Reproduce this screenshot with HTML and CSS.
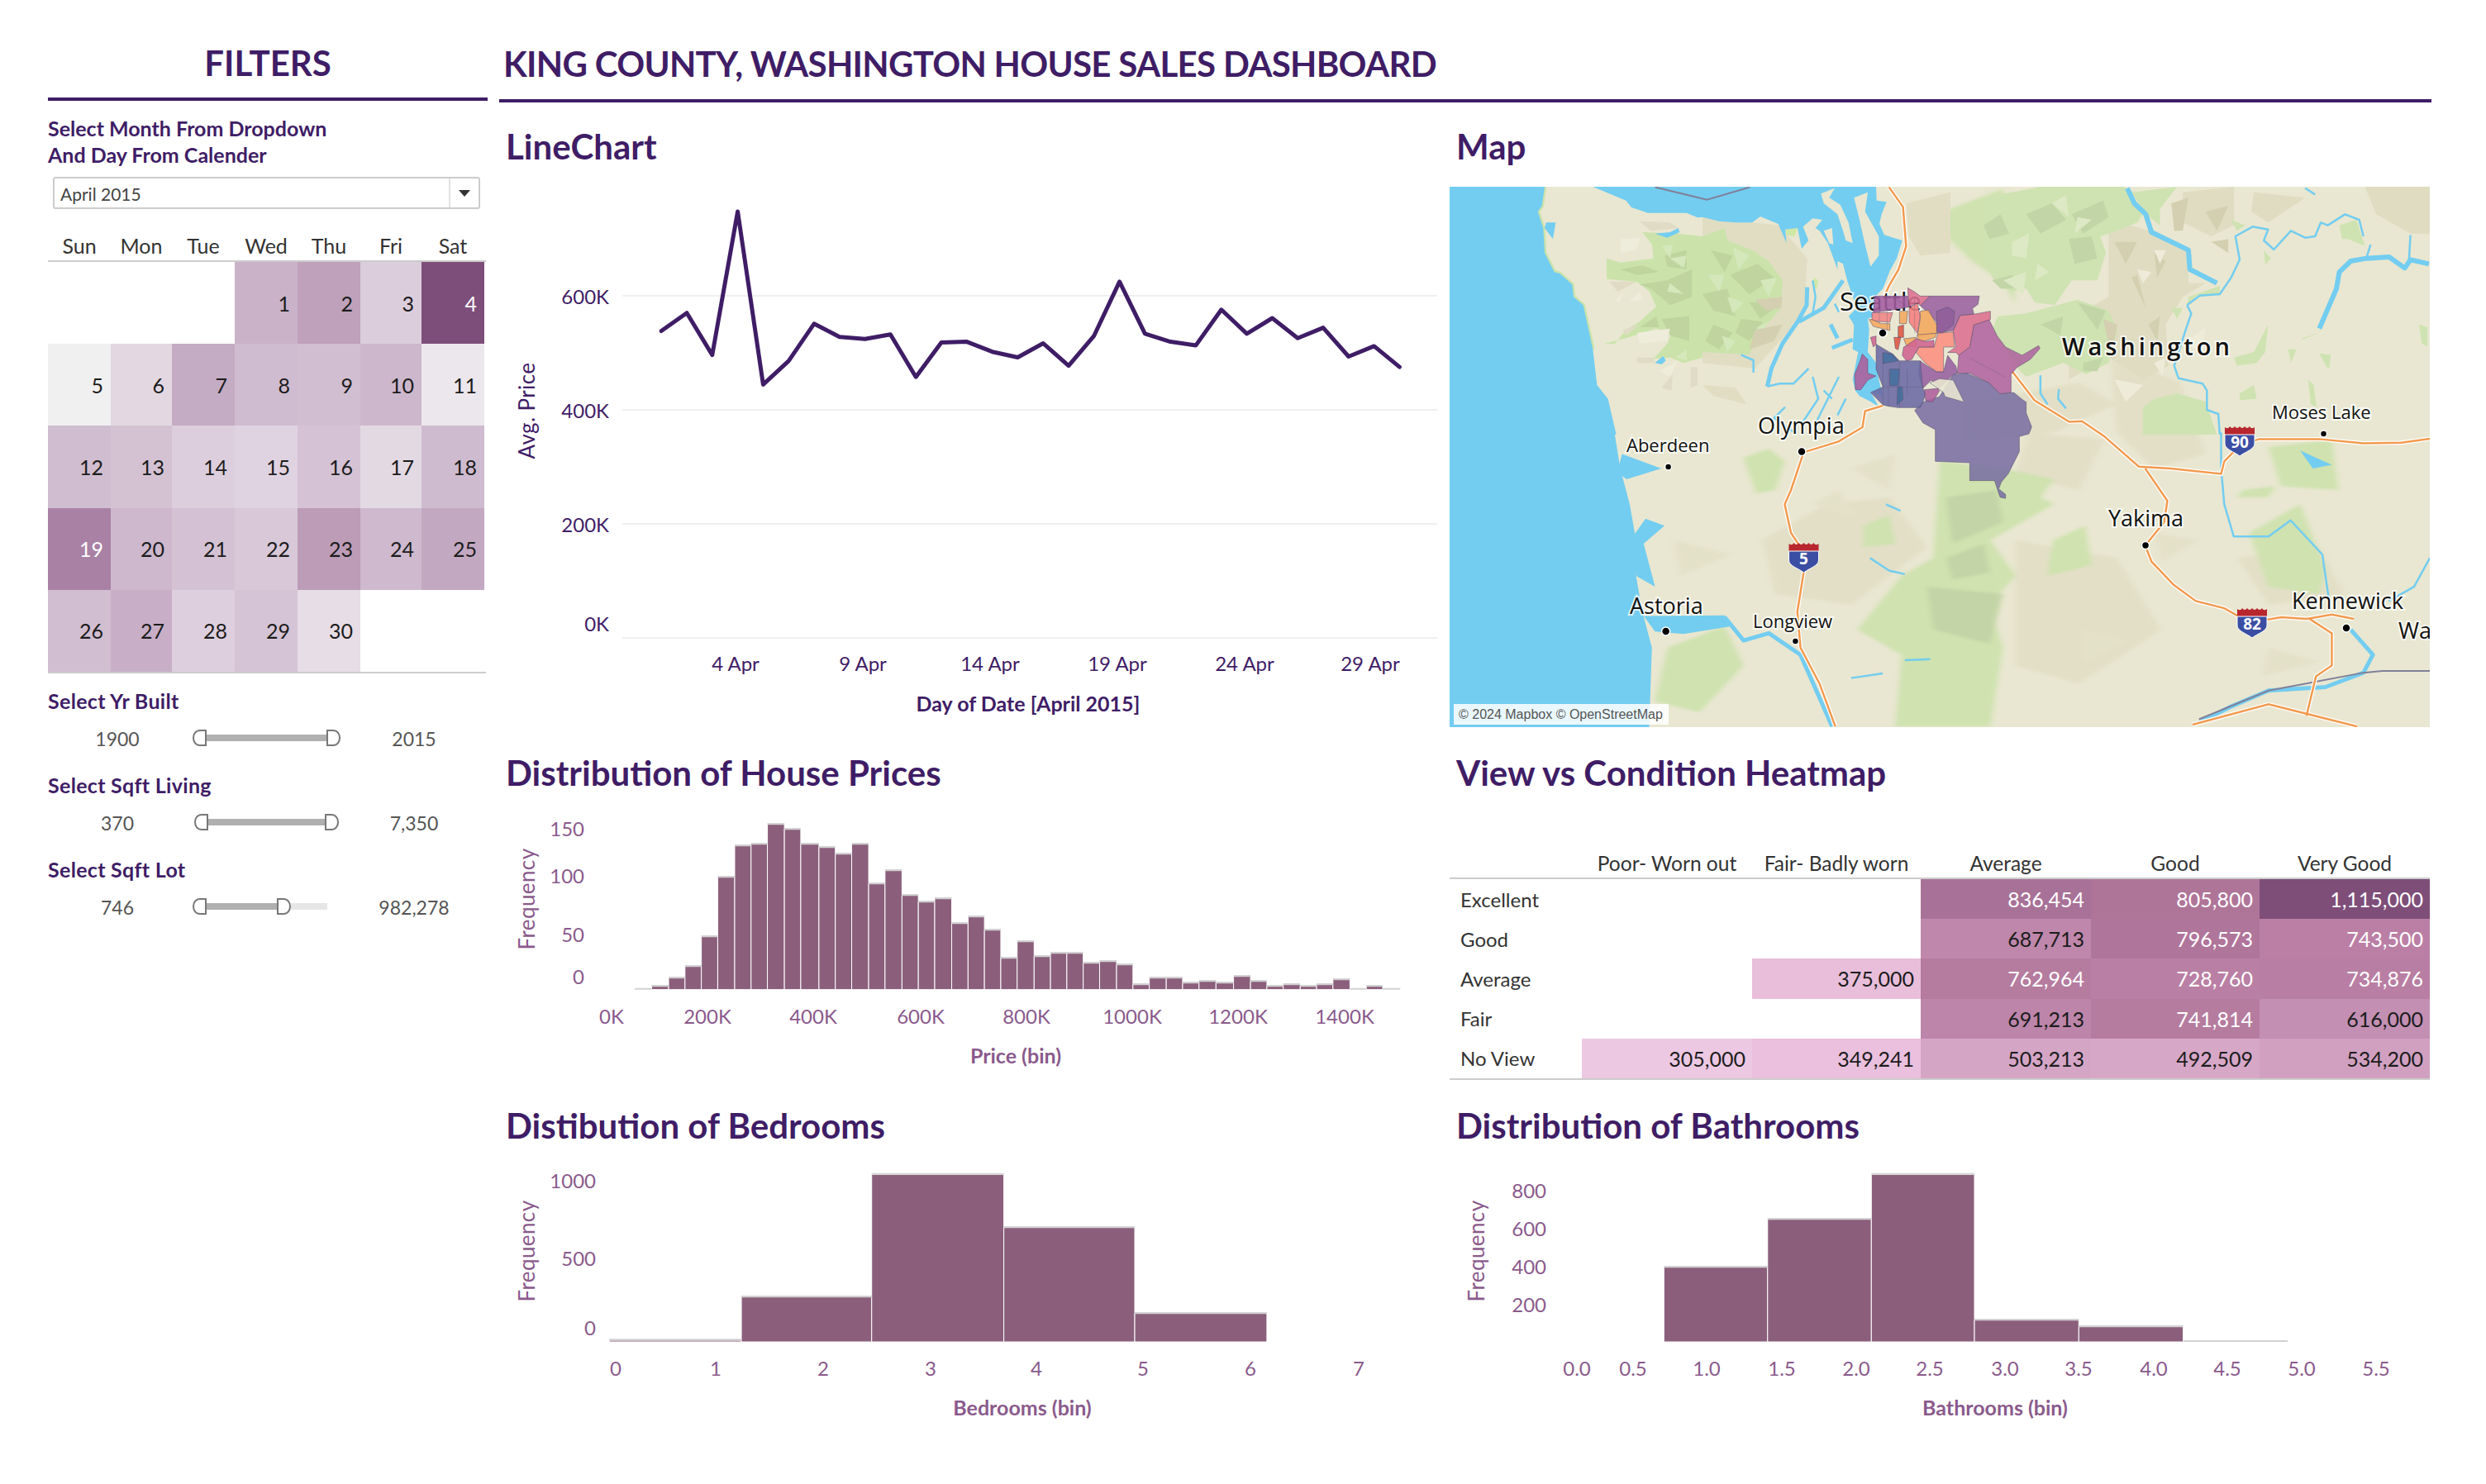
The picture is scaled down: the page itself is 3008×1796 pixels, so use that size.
FILE: index.html
```html
<!DOCTYPE html>
<html lang="en">
<head>
<meta charset="utf-8">
<title>King County, Washington House Sales Dashboard</title>
<link rel="stylesheet" href="styles.css">
</head>
<body>
<div class="page">
  <aside class="sidebar">
    <h2 class="filters-title">FILTERS</h2>
    <p class="filter-intro">Select Month From Dropdown<br>And Day From Calender</p>
    <div class="dropdown"><span class="dropdown-value">April 2015</span><span class="dropdown-btn"><svg width="14" height="8" viewBox="0 0 14 8"><path d="M0 0H14L7 8Z" fill="#333"/></svg></span></div>
    <div class="weekdays"><span>Sun</span><span>Mon</span><span>Tue</span><span>Wed</span><span>Thu</span><span>Fri</span><span>Sat</span></div>
    <div class="calendar">
      <span class="day"></span><span class="day"></span><span class="day"></span>
      <span class="day" style="background:#cab3c9">1</span>
      <span class="day" style="background:#bfa1bb">2</span>
      <span class="day" style="background:#dccddc">3</span>
      <span class="day light" style="background:#7e4e7a">4</span>
      <span class="day" style="background:#f0f0f0">5</span>
      <span class="day" style="background:#e3d8e2">6</span>
      <span class="day" style="background:#c4acc4">7</span>
      <span class="day" style="background:#d0bcd0">8</span>
      <span class="day" style="background:#d1bfd1">9</span>
      <span class="day" style="background:#cdb7cc">10</span>
      <span class="day" style="background:#ece7ec">11</span>
      <span class="day" style="background:#d0bdd0">12</span>
      <span class="day" style="background:#d4c2d3">13</span>
      <span class="day" style="background:#dccedc">14</span>
      <span class="day" style="background:#e0d3e1">15</span>
      <span class="day" style="background:#d5c3d5">16</span>
      <span class="day" style="background:#e3d9e3">17</span>
      <span class="day" style="background:#cfbbcf">18</span>
      <span class="day light" style="background:#a981a5">19</span>
      <span class="day" style="background:#cdb8cd">20</span>
      <span class="day" style="background:#d4c2d4">21</span>
      <span class="day" style="background:#d8c8d8">22</span>
      <span class="day" style="background:#bd9cb8">23</span>
      <span class="day" style="background:#ceb9ce">24</span>
      <span class="day" style="background:#c3a8c2">25</span>
      <span class="day" style="background:#d1bed1">26</span>
      <span class="day" style="background:#c8afc7">27</span>
      <span class="day" style="background:#decfde">28</span>
      <span class="day" style="background:#d5c4d5">29</span>
      <span class="day" style="background:#e7dde6">30</span>
      <span class="day"></span><span class="day"></span>
    </div>
    <div class="slider-group">
      <div class="slider-label">Select Yr Built</div>
      <div class="slider-row">
        <span class="slider-value">1900</span>
        <div class="range">
          <svg class="handle" viewBox="0 0 17 20"><path d="M16 1H9C4 1 1 5 1 10S4 19 9 19H16Z"/></svg>
          <span class="fill"></span>
          <svg class="handle" viewBox="0 0 17 20"><path d="M1 1H8C13 1 16 5 16 10S13 19 8 19H1Z"/></svg>
        </div>
        <span class="slider-value">2015</span>
      </div>
    </div>
    <div class="slider-group">
      <div class="slider-label">Select Sqft Living</div>
      <div class="slider-row">
        <span class="slider-value">370</span>
        <div class="range range-narrow">
          <svg class="handle" viewBox="0 0 17 20"><path d="M16 1H9C4 1 1 5 1 10S4 19 9 19H16Z"/></svg>
          <span class="fill"></span>
          <svg class="handle" viewBox="0 0 17 20"><path d="M1 1H8C13 1 16 5 16 10S13 19 8 19H1Z"/></svg>
        </div>
        <span class="slider-value">7,350</span>
      </div>
    </div>
    <div class="slider-group">
      <div class="slider-label">Select Sqft Lot</div>
      <div class="slider-row">
        <span class="slider-value">746</span>
        <div class="range range-partial">
          <svg class="handle" viewBox="0 0 17 20"><path d="M16 1H9C4 1 1 5 1 10S4 19 9 19H16Z"/></svg>
          <span class="fill"></span>
          <svg class="handle" viewBox="0 0 17 20"><path d="M1 1H8C13 1 16 5 16 10S13 19 8 19H1Z"/></svg>
          <span class="rest"></span>
        </div>
        <span class="slider-value">982,278</span>
      </div>
    </div>
  </aside>

  <main class="main">
    <h1 class="main-title">KING COUNTY, WASHINGTON HOUSE SALES DASHBOARD</h1>
    <div class="panels">

      <section class="panel panel-top">
        <h3 class="panel-title">LineChart</h3>
        <svg class="chart chart-line" viewBox="604 226 1136 654">
          <g class="grid-lines">
            <line x1="753" x2="1739" y1="358" y2="358"/><line x1="753" x2="1739" y1="496" y2="496"/><line x1="753" x2="1739" y1="634" y2="634"/><line x1="753" x2="1739" y1="772" y2="772"/>
          </g>
          <g class="tick dark end">
            <text x="737" y="358">600K</text><text x="737" y="496">400K</text><text x="737" y="634">200K</text><text x="737" y="754">0K</text>
          </g>
          <g class="tick dark mid">
            <text x="890" y="802">4 Apr</text><text x="1044" y="802">9 Apr</text><text x="1198" y="802">14 Apr</text><text x="1352" y="802">19 Apr</text><text x="1506" y="802">24 Apr</text><text x="1658" y="802">29 Apr</text>
          </g>
          <text class="axis-title dark mid" x="1244" y="851">Day of Date [April 2015]</text>
          <text class="axis-title y-title dark mid" transform="rotate(-90 637 497)" x="637" y="497">Avg. Price</text>
          <polyline class="price-line" points="800.2,400.5 831,378.7 861.8,429.6 892.6,256 923.4,465.4 954.2,436.8 985,391.8 1015.8,407.8 1046.6,410.2 1077.4,404.8 1108.2,456.2 1139,414.5 1169.8,413.6 1200.6,425.7 1231.4,432.5 1262.2,415.5 1293,442.7 1323.8,406.3 1354.6,340.9 1385.4,403.9 1416.2,413.6 1447,417.9 1477.8,374.8 1508.6,403.9 1539.4,385 1570.2,409.2 1601,396.6 1631.8,431.5 1662.6,418.9 1693.4,444.1"/>
        </svg>
      </section>

      <section class="panel panel-top">
        <h3 class="panel-title">Map</h3>
        <svg class="chart chart-map" viewBox="0 0 1186 654">
          <svg x="-4" y="-6" width="1200" height="680" viewBox="0 0 1568 1568" preserveAspectRatio="none">
            <rect width="1568" height="1568" fill="#e9e7d1"/>
            <g class="relief-soft">
              <path fill="#e2dfc6" d="M1050 480L1160 560 1200 760 1120 800 1060 700ZM500 1000L600 900 700 880 760 1020 640 1180 520 1150ZM900 1000L1060 1050 1130 1250 1000 1400 900 1350ZM1250 1050L1380 1020 1420 1150 1300 1180ZM920 700L1040 720 1000 860 900 820ZM820 620L1000 560 1060 620 960 700 820 720Z"/>
              <path fill="#cfe2af" d="M780 780L880 800 960 830 940 880 960 900 860 1000 900 1100 860 1180 880 1300 860 1520 710 1520 720 1320 650 1250 720 1100 770 1050ZM960 1000L1010 960 1020 1070 950 1100ZM470 770L510 745 535 780 520 860 490 870ZM660 960L700 930 710 1010 660 1020ZM1270 980L1350 900 1390 1080 1380 1150 1300 1130ZM350 1300L440 1240 470 1350 400 1480 330 1450ZM1300 740L1400 720 1410 860 1320 850ZM1260 860L1310 850 1300 880 1250 880ZM760 100L880 20 900 340 880 280 830 220Z"/>
              <path fill="#c3d5a6" d="M790 880L870 860 880 950 800 1010ZM760 1130L880 1150 860 1290 770 1250ZM790 1050L850 1010 860 1090 800 1110Z"/>
              <path fill="#e4e1c9" d="M580 900L620 860 650 940ZM1120 980L1190 1000 1130 1060ZM1000 1250L1080 1280 1010 1340ZM640 800L710 760 700 860ZM1300 1300L1380 1340 1290 1380ZM360 1000L450 1040 370 1100Z"/>
            </g>
          </svg>
          <svg x="0" y="0" width="306" height="300" viewBox="0 0 918 900">
            <g class="relief">
              <path fill="#cbe3ab" d="M700 165L830 170 918 180V620L850 640 800 620 740 625 790 570 805 530 750 515 640 550 560 570 600 570 640 520 690 490 750 435 725 380 680 345 570 335V260L620 275 740 260 735 210Z"/>
              <path fill="#bfd49f" d="M620 300L700 285 760 310 680 320ZM780 250L860 230 860 300 790 290ZM690 355L790 340 880 300 880 400 800 430 730 370ZM770 480L870 470 870 560 800 540ZM690 510L750 470 760 510Z"/>
              <path fill="#d4e8bb" d="M800 260L860 250 850 295ZM800 350L850 390 790 380ZM820 620L860 590 860 630ZM770 215L810 210 800 260Z"/>
              <path fill="#dfdbc4" d="M690 125L800 130 830 150 730 160ZM580 345L680 345 610 380ZM630 520L690 500 640 540ZM680 620L740 620 745 640 680 640ZM770 730L810 680 805 740ZM875 655H900V720L875 730Z"/>
              <path fill="#eeecda" d="M620 190L690 185 680 230 620 240ZM600 415L630 385 615 420ZM650 420L690 380 700 410ZM680 530L800 515 790 560 690 570ZM760 670L830 630 800 690Z"/>
            </g>
            <path class="coast" d="M345 0L335 70 320 90 340 150 345 240 380 310 400 315 445 355 450 400 485 430 520 590"/>
            <path class="water-fill" d="M0 0H345L335 70 320 90 340 150 345 240 380 310 400 315 445 355 450 400 485 430 520 590 535 720 575 770 605 900H0ZM520 0L640 50 660 75 720 95 860 95 900 112 918 110V0ZM350 130L385 130 375 190 345 150ZM745 170L800 165 830 150 835 165 790 185ZM745 640L775 615 785 630 770 645Z"/>
          </svg>
          <svg x="306" y="0" width="300" height="300" viewBox="0 0 900 900">
            <g class="relief">
              <path fill="#e0ddc3" d="M0 110L280 140 380 260 370 440 300 540 190 660 0 640ZM740 60L900 20V240L790 250 750 180ZM0 720L120 730 160 790 40 760Z"/>
              <path fill="#cbe3ab" d="M0 180L80 150 90 195 180 230 240 270 290 340 285 440 200 540 170 610 0 600Z"/>
              <path fill="#bfd49f" d="M30 230L110 250 80 310ZM100 320L200 280 260 330 170 390ZM0 390L90 370 120 470 40 450ZM170 420L290 420 210 480ZM140 480L220 490 170 560 120 530ZM40 500L110 530 60 590 10 560Z"/>
              <path fill="#d4e8bb" d="M110 220L170 250 130 300ZM20 320L80 320 60 380ZM210 340L270 330 240 400ZM90 400L150 420 110 460ZM200 510L240 490 180 580ZM70 540L120 560 90 600Z"/>
              <path fill="#d4cfb0" d="M190 410L290 400 285 440 230 450ZM190 520L290 500 260 560 170 590Z"/>
              <path fill="#cfe8a6" d="M300 155L345 150 335 180 305 175ZM405 330L420 340 415 370 400 370Z"/>
            </g>
            <path class="water-fill" d="M0 0H630L632 50 668 55 650 100 642 135 660 175 725 195 705 260 680 305 655 370 630 395 620 470 600 480 605 520 600 600 630 640 640 700 655 760 610 745 640 800 610 780 570 760 555 740 545 700 565 600 545 590 550 500 530 470 560 440 525 340 510 280 490 270 490 300 455 205 425 160 410 150 435 120 400 115 365 145 385 195 360 225 345 150 300 155 305 205 275 135 210 108 180 130 120 130 60 125 0 110Z"/>
            <path class="land-fill" d="M430 25L480 5 460 40 500 65 530 130 545 205 520 195 510 160 490 100 440 60ZM550 40L600 20 590 90 640 180 640 250 610 290 590 210 570 120ZM440 160L470 150 475 210 460 205Z"/>
            <g class="channels">
              <polyline points="380,365 378,430 345,490 290,570 250,660 235,725"/>
              <polyline class="thin" points="235,725 280,715 330,715 385,660"/>
              <polyline class="thin" points="400,340 410,400 400,460"/>
              <polyline points="510,340 440,440 350,490"/>
              <polyline class="thin" points="400,690 420,770 360,860"/>
              <polyline class="thin" points="495,690 450,780 410,860"/>
              <polyline class="thin" points="520,770 490,830"/>
              <polyline class="thin" points="300,800 260,840 330,890"/>
              <polyline class="thin" points="440,740 470,770"/>
              <polyline points="465,500 490,550"/>
              <polyline points="470,585 545,555"/>
              <polyline class="thin" points="545,480 560,520"/>
              <polyline class="thin" points="140,610 185,630 185,675"/>
              <polyline class="thin" points="480,425 495,455"/>
            </g>
          </svg>
          <svg x="646" y="0" width="540" height="300" viewBox="0 0 1568 900" preserveAspectRatio="none">
            <g class="relief">
              <path fill="#dfdcc2" d="M440 120L620 170 720 230 720 350 780 350 700 400 640 500 650 650 560 700 440 620 300 700 300 480 440 400ZM700 20L880 0 880 140 800 180 700 130ZM950 20L1130 40 1000 130 940 90ZM1340 0H1568V170L1500 170 1380 100Z"/>
              <path fill="#cfe3b2" d="M0 40L200 0H495L560 100 540 130 470 160 410 180 430 240 400 340 310 340 290 370 250 430 180 420 150 370 100 380 40 350 0 250ZM50 470L150 460 330 410 440 450 470 520 440 640 360 680 280 640 150 690 120 660 30 520ZM520 20L680 0 620 80 620 140 570 100ZM560 800L600 770 680 750 780 780 820 900H560ZM900 750L950 720 960 770 900 775ZM880 620L950 600 1000 500 990 600 960 640 890 650ZM1070 590L1100 590 1080 640ZM1120 550L1180 530 1120 555ZM870 120L920 140 890 160ZM1250 140L1310 120 1340 215 1280 190 1260 190ZM720 400L830 360 830 390 750 395 715 430ZM985 230L1010 260 990 285ZM1140 700L1160 720 1170 800 1150 790ZM1180 605L1220 610 1215 660 1205 655ZM1530 500L1560 510 1560 580 1540 570ZM660 440L700 440 680 480Z"/>
              <path fill="#c2d5a6" d="M150 100L240 60 290 120 200 170ZM310 100L420 50 440 110 350 170ZM0 140L60 100 90 170 20 190ZM300 190L380 180 400 260 320 280ZM30 340L100 320 130 370 60 370ZM330 420L430 450 400 520ZM200 500L280 470 270 540ZM350 640L420 620 400 670 350 670Z"/>
              <path fill="#dde9c4" d="M240 60L290 30 300 110ZM100 200L160 170 150 260 100 250ZM70 340L150 310 140 390ZM330 110L380 120 320 170ZM190 280L230 310 180 340Z"/>
              <path fill="#d3cfb0" d="M460 200L500 280 540 200ZM520 330L570 440 540 320ZM600 240L640 270 610 330ZM800 200L860 190 860 240ZM780 90L860 70 820 160ZM660 60L720 40 700 160 670 160ZM580 500L620 470 610 560ZM420 480L470 500 450 620Z"/>
              <path fill="#eeecd9" d="M600 230L640 230 620 280ZM540 300L590 310 560 350ZM700 570L780 510 770 600ZM460 700L560 720 500 780ZM600 640L640 620 630 690Z"/>
            </g>
            <g class="channels">
              <polyline class="thick" points="505,5 530,60 570,100 590,165 720,230 725,300 820,350"/>
              <polyline class="thin" points="1130,5 1165,28"/>
              <polyline class="thin" points="715,430 730,460 710,520 695,570 670,650 685,695 770,715 785,740 785,810 825,825 830,900"/>
              <polyline class="thin" points="715,430 760,395 830,390 870,330 900,265 885,180 945,145 1000,155 985,195 1020,228 1080,160 1130,185 1165,180 1185,130 1210,140 1270,100 1320,120 1335,180"/>
              <polyline class="thick" points="1180,515 1240,370 1250,310 1290,270 1345,260 1425,255 1480,295 1500,265 1565,280"/>
              <polyline class="thin" points="1360,210 1345,260"/>
              <polyline class="thin" points="1500,175 1495,265"/>
              <polyline class="thin" points="200,685 200,750 225,790"/>
              <polyline class="thin" points="265,735 262,770 290,805"/>
            </g>
          </svg>
          <svg x="-4" y="-6" width="1200" height="680" viewBox="0 0 1568 1568" preserveAspectRatio="none">
            <g class="water">
              <path d="M0 690H265L275 800 290 900 300 1000 300 1100 310 1200 325 1300 320 1568H0Z"/>
              <path d="M278 760L340 800 285 830 270 810ZM315 940L345 960 312 1010 330 1130 300 1100 295 990ZM312 1212L440 1210 452 1240 375 1262 330 1255ZM1350 750L1400 790 1370 800Z"/>
            </g>
            <g class="rivers">
              <polyline points="670,1050 700,1085 725,1095"/>
              <polyline points="640,1385 690,1372"/>
              <polyline points="725,1335 765,1332"/>
              <polyline points="695,900 718,918"/>
              <polyline points="1225,700 1225,800 1230,900 1245,990 1300,990 1335,945 1385,1040 1395,1160"/>
              <polyline points="1555,1050 1530,1130 1490,1170"/>
              <polyline class="wide" points="1430,1250 1465,1320 1450,1370 1390,1410 1300,1420 1240,1465 1190,1510"/>
              <polyline class="wide" points="440,1215 470,1280 510,1260 560,1320 585,1420 610,1520"/>
            </g>
            <polyline class="border-line" points="330,15 412,50 480,15"/>
            <polyline class="border-line" points="1190,1500 1300,1420 1450,1370 1480,1365 1555,1365"/>
            <g class="road-case">
              <polyline points="700,15 722,70 727,180 715,245 700,290 690,330"/>
              <polyline points="690,625 662,640 658,685 620,725 565,755 545,860 535,900 545,980 560,1020 565,1090 555,1200 560,1300 590,1400 615,1520"/>
              <polyline points="895,530 930,610 985,670 1005,668 1040,710 1095,795 1145,800 1225,815 1230,780 1255,735 1285,718 1380,718 1450,730 1510,728 1555,717"/>
              <polyline points="1105,800 1140,890 1135,950 1105,1015 1115,1060 1150,1125 1185,1170 1230,1190 1270,1230 1320,1215 1360,1220 1400,1208 1435,1220"/>
              <polyline points="1365,1220 1400,1260 1400,1350 1375,1380 1360,1490"/>
              <polyline points="1180,1515 1300,1458 1440,1520"/>
            </g>
            <g class="road">
              <polyline points="700,15 722,70 727,180 715,245 700,290 690,330"/>
              <polyline points="690,625 662,640 658,685 620,725 565,755 545,860 535,900 545,980 560,1020 565,1090 555,1200 560,1300 590,1400 615,1520"/>
              <polyline points="895,530 930,610 985,670 1005,668 1040,710 1095,795 1145,800 1225,815 1230,780 1255,735 1285,718 1380,718 1450,730 1510,728 1555,717"/>
              <polyline points="1105,800 1140,890 1135,950 1105,1015 1115,1060 1150,1125 1185,1170 1230,1190 1270,1230 1320,1215 1360,1220 1400,1208 1435,1220"/>
              <polyline points="1365,1220 1400,1260 1400,1350 1375,1380 1360,1490"/>
              <polyline points="1180,1515 1300,1458 1440,1520"/>
            </g>
          </svg>
          <g class="city-dots">
            <circle cx="524" cy="177" r="5"/><circle cx="426" cy="320.5" r="5"/><circle cx="264.6" cy="339" r="4"/><circle cx="842" cy="434" r="4.5"/><circle cx="261.6" cy="538" r="5"/><circle cx="418.4" cy="550" r="4"/><circle cx="1085" cy="534" r="5"/><circle cx="1057.5" cy="299" r="4"/>
          </g>
          <g class="city">
            <text class="huge" x="472" y="150">Seattle</text>
            <text class="state" x="741" y="204">Washington</text>
            <text x="995" y="281">Moses Lake</text>
            <text class="big" x="373" y="299">Olympia</text>
            <text x="214" y="321">Aberdeen</text>
            <text class="big" x="797" y="411">Yakima</text>
            <text class="big" x="218" y="517">Astoria</text>
            <text x="367" y="534">Longview</text>
            <text class="big" x="1019" y="511">Kennewick</text>
            <text class="big" x="1148" y="547">Wa</text>
          </g>
          <svg x="396" y="94" width="320" height="300" viewBox="0 0 960 900">
            <g class="county">
              <path fill="#7a70a3" d="M500 530L530 500 590 480 640 400 690 395 770 430 810 470 860 465 890 490 905 500 905 540 925 590 915 615 880 625 880 680 860 720 840 760 815 790 805 815 830 835 830 850 810 845 800 815 790 785 700 785 700 720 575 715 575 600 530 575Z"/>
              <path fill="#b0649f" d="M655 395L660 330 700 300 715 220 770 200 800 260 830 300 890 330 950 295 955 305 920 345 870 375 850 400 850 465 810 470 770 430 700 395Z"/>
              <path fill="#dd6f8f" d="M640 240L665 185 720 180 775 170 775 200 715 220 700 300 660 330 650 320 620 320 650 300Z"/>
              <path fill="#9a629f" d="M555 115L735 115 730 145 710 160 715 180 665 185 645 230 640 240 580 250 580 210 555 180 520 150Z"/>
              <path fill="#8f5f9a" d="M580 170L620 155 645 170 640 220 600 250 580 240Z"/>
              <path fill="#f4a95f" d="M520 170L550 165 580 220 580 250 510 260 520 200Z"/>
              <path fill="#fb8f80" d="M585 250L640 245 645 300 605 300 605 390 580 390 540 360 505 320 515 300 570 300Z"/>
              <path fill="#f5807f" d="M480 160L510 140 520 190 510 250 480 210Z"/>
              <path fill="#dd6f8f" d="M475 85L500 100 520 115 555 115 520 150 510 140 480 155Z"/>
              <path fill="#a35b9f" d="M355 115L475 115 480 155 420 165 350 175Z"/>
              <path fill="#f08585" d="M345 175L420 175 410 210 345 205Z"/>
              <path fill="#f4a95f" d="M335 200L345 200 380 215 410 215 410 240 350 225Z"/>
              <path fill="#dd5540" d="M440 225L460 220 460 265 440 265ZM425 265L450 265 440 310 430 305Z"/>
              <path fill="#f4a95f" d="M445 170L475 170 470 215 445 215ZM460 270L505 265 505 300 470 295ZM510 255L580 250 575 265 530 280 510 270Z"/>
              <path fill="#d0638f" d="M505 270L540 280 570 275 570 300 515 300 490 345 470 350 455 330 460 300 470 295Z"/>
              <path fill="#96609f" d="M520 350L540 365 580 390 605 390 620 330 650 370 655 395 640 400 590 450 560 420 530 450 515 400Z"/>
              <path fill="#6a6aa3" d="M360 290L420 325 445 350 520 350 530 450 540 470 530 500 520 520 440 520 405 515 385 510 340 465 385 445 360 380Z"/>
              <path fill="#44709f" d="M385 320L420 325 440 350 385 360ZM410 380L445 380 440 440 410 440ZM438 445L455 445 458 490 436 510Z"/>
              <path fill="#ad5f9a" d="M310 325L330 345 330 395 360 405 330 420 305 455 285 455 282 400 300 355Z"/>
              <path fill="#d0638f" d="M340 265L360 260 360 290 350 300Z"/>
              <path fill="#ad5f9a" d="M535 455L585 450 590 460 565 500 540 495Z"/>
              <path fill="#e9e7d1" d="M555 430L590 415 640 420 680 500 610 480 605 465 585 450Z"/>
              <path class="seam" d="M385 320V510M445 350V520M473 380V470M360 290L440 350M385 445H530M405 380V515M400 165V240M372 115V215M420 120L480 155M500 120V250M700 340L830 410"/>
            </g>
          </svg>
          <rect class="attribution-box" x="5" y="626" width="260" height="25"/>
          <text class="attribution" x="11" y="644">© 2024 Mapbox © OpenStreetMap</text>
          <g transform="translate(428.5 449)"><path class="shield-top" d="M-18-8V-17Q-14-14-12-18-9-14-6-18-3-14 0-18 3-14 6-18 9-14 12-18 14-14 18-17V-8Z"/><path class="shield-body" d="M-18-8H18V3C18 10 6 13 0 18-6 13-18 10-18 3Z"/><text class="shield-num" y="8">5</text></g>
          <g transform="translate(956 308)"><path class="shield-top" d="M-18-8V-17Q-14-14-12-18-9-14-6-18-3-14 0-18 3-14 6-18 9-14 12-18 14-14 18-17V-8Z"/><path class="shield-body" d="M-18-8H18V3C18 10 6 13 0 18-6 13-18 10-18 3Z"/><text class="shield-num" y="8">90</text></g>
          <g transform="translate(971 528)"><path class="shield-top" d="M-18-8V-17Q-14-14-12-18-9-14-6-18-3-14 0-18 3-14 6-18 9-14 12-18 14-14 18-17V-8Z"/><path class="shield-body" d="M-18-8H18V3C18 10 6 13 0 18-6 13-18 10-18 3Z"/><text class="shield-num" y="8">82</text></g>
        </svg>
      </section>

      <section class="panel panel-mid">
        <h3 class="panel-title">Distribution of House Prices</h3>
        <svg class="chart chart-hist" viewBox="604 970 1136 360">
          <svg x="600" y="900" width="1150" height="420" viewBox="0 0 1568 1260" preserveAspectRatio="none">
            <g class="bars">
              <rect x="257" y="881" width="28" height="12"/><rect x="285" y="851" width="27" height="42"/><rect x="312" y="809" width="27" height="84"/><rect x="339" y="701" width="27" height="192"/><rect x="366" y="485" width="28" height="408"/><rect x="394" y="371" width="27" height="522"/><rect x="421" y="365" width="27" height="528"/><rect x="448" y="293" width="28" height="600"/><rect x="476" y="311" width="27" height="582"/><rect x="503" y="365" width="30" height="528"/><rect x="533" y="377" width="27" height="516"/><rect x="560" y="401" width="27" height="492"/><rect x="587" y="365" width="28" height="528"/><rect x="615" y="509" width="27" height="384"/><rect x="642" y="461" width="28" height="432"/><rect x="670" y="551" width="27" height="342"/><rect x="697" y="575" width="27" height="318"/><rect x="724" y="563" width="28" height="330"/><rect x="752" y="653" width="27" height="240"/><rect x="779" y="629" width="27" height="264"/><rect x="806" y="677" width="27" height="216"/><rect x="833" y="779" width="27" height="114"/><rect x="860" y="719" width="28" height="174"/><rect x="888" y="773" width="27" height="120"/><rect x="915" y="761" width="27" height="132"/><rect x="942" y="761" width="27" height="132"/><rect x="969" y="797" width="27" height="96"/><rect x="996" y="791" width="28" height="102"/><rect x="1024" y="803" width="27" height="90"/><rect x="1051" y="875" width="27" height="18"/><rect x="1078" y="851" width="28" height="42"/><rect x="1106" y="851" width="27" height="42"/><rect x="1133" y="869" width="27" height="24"/><rect x="1160" y="863" width="28" height="30"/><rect x="1188" y="869" width="29" height="24"/><rect x="1217" y="845" width="28" height="48"/><rect x="1245" y="863" width="27" height="30"/><rect x="1272" y="881" width="27" height="12"/><rect x="1299" y="875" width="28" height="18"/><rect x="1327" y="881" width="27" height="12"/><rect x="1354" y="875" width="27" height="18"/><rect x="1381" y="857" width="28" height="36"/><rect x="1436" y="881" width="27" height="12"/>
            </g>
            <path class="caps" d="M229 890H257M257 879H285M285 849H312M312 807H339M339 699H366M366 483H394M394 369H421M421 363H448M448 291H476M476 309H503M503 363H533M533 375H560M560 399H587M587 363H615M615 507H642M642 459H670M670 549H697M697 573H724M724 561H752M752 651H779M779 627H806M806 675H833M833 777H860M860 717H888M888 771H915M915 759H969M969 795H996M996 789H1024M1024 801H1051M1051 873H1078M1078 849H1133M1133 867H1160M1160 861H1188M1188 867H1217M1217 843H1245M1245 861H1272M1272 879H1299M1299 873H1327M1327 879H1354M1354 873H1381M1381 855H1409M1409 890H1436M1436 879H1463M1463 890H1492"/>
          </svg>
          <g class="tick mauve end">
            <text x="707" y="1002">150</text><text x="707" y="1059">100</text><text x="707" y="1130">50</text><text x="707" y="1181">0</text>
          </g>
          <g class="tick mauve mid">
            <text x="740" y="1229">0K</text><text x="856" y="1229">200K</text><text x="984" y="1229">400K</text><text x="1114" y="1229">600K</text><text x="1242" y="1229">800K</text><text x="1370" y="1229">1000K</text><text x="1498" y="1229">1200K</text><text x="1627" y="1229">1400K</text>
          </g>
          <text class="axis-title mauve mid" x="1229" y="1277">Price (bin)</text>
          <text class="axis-title y-title mauve mid" transform="rotate(-90 637 1088)" x="637" y="1088">Frequency</text>
        </svg>
      </section>

      <section class="panel panel-mid">
        <h3 class="panel-title">View vs Condition Heatmap</h3>
        <div class="heatmap">
          <div class="heat-head">
            <span></span><span>Poor- Worn out</span><span>Fair- Badly worn</span><span>Average</span><span>Good</span><span>Very Good</span>
          </div>
          <div class="heat-body">
            <span class="heat-row">Excellent</span><span class="heat-cell"></span><span class="heat-cell"></span>
            <span class="heat-cell light" style="background:#a87298">836,454</span><span class="heat-cell light" style="background:#af7599">805,800</span><span class="heat-cell light" style="background:#7e4e79">1,115,000</span>
            <span class="heat-row">Good</span><span class="heat-cell"></span><span class="heat-cell"></span>
            <span class="heat-cell" style="background:#bf87ab">687,713</span><span class="heat-cell light" style="background:#b0759b">796,573</span><span class="heat-cell light" style="background:#bb7fa5">743,500</span>
            <span class="heat-row">Average</span><span class="heat-cell"></span><span class="heat-cell" style="background:#e8bedb">375,000</span>
            <span class="heat-cell light" style="background:#b57c9f">762,964</span><span class="heat-cell light" style="background:#ba7fa4">728,760</span><span class="heat-cell light" style="background:#b97ea3">734,876</span>
            <span class="heat-row">Fair</span><span class="heat-cell"></span><span class="heat-cell"></span>
            <span class="heat-cell" style="background:#bd85aa">691,213</span><span class="heat-cell light" style="background:#b57c9f">741,814</span><span class="heat-cell" style="background:#c38fb3">616,000</span>
            <span class="heat-row">No View</span><span class="heat-cell" style="background:#ecc8e3">305,000</span><span class="heat-cell" style="background:#eac0de">349,241</span>
            <span class="heat-cell" style="background:#d5a5c6">503,213</span><span class="heat-cell" style="background:#d7a7c8">492,509</span><span class="heat-cell" style="background:#d1a0c1">534,200</span>
          </div>
        </div>
      </section>

      <section class="panel panel-low">
        <h3 class="panel-title">Distibution of Bedrooms</h3>
        <svg class="chart chart-low" viewBox="604 1395 1136 340">
          <svg x="600" y="1320" width="1150" height="440" viewBox="0 0 1568 1320" preserveAspectRatio="none">
            <g class="bars">
              <rect x="187" y="906" width="218" height="6"/><rect x="405" y="749" width="215" height="163"/><rect x="620" y="304" width="218" height="608"/><rect x="838" y="497" width="216" height="415"/><rect x="1054" y="809" width="218" height="103"/>
            </g>
            <path class="caps" d="M187 904H405M405 747H620M620 302H838M838 495H1054M1054 807H1272"/>
          </svg>
          <g class="tick mauve end">
            <text x="721" y="1428">1000</text><text x="721" y="1522">500</text><text x="721" y="1606">0</text>
          </g>
          <g class="tick mauve mid">
            <text x="745" y="1655">0</text><text x="866" y="1655">1</text><text x="996" y="1655">2</text><text x="1126" y="1655">3</text><text x="1254" y="1655">4</text><text x="1383" y="1655">5</text><text x="1513" y="1655">6</text><text x="1644" y="1655">7</text>
          </g>
          <text class="axis-title mauve mid" x="1237" y="1703">Bedrooms (bin)</text>
          <text class="axis-title y-title mauve mid" transform="rotate(-90 637 1514)" x="637" y="1514">Frequency</text>
        </svg>
      </section>

      <section class="panel panel-low">
        <h3 class="panel-title">Distribution of Bathrooms</h3>
        <svg class="chart chart-low" viewBox="1754 1395 1186 340">
          <svg x="1750" y="1320" width="1200" height="440" viewBox="0 0 1568 1320" preserveAspectRatio="none">
            <g class="bars">
              <rect x="344" y="641" width="164" height="271"/><rect x="508" y="467" width="164" height="445"/><rect x="672" y="304" width="163" height="608"/><rect x="835" y="833" width="165" height="79"/><rect x="1000" y="857" width="165" height="55"/>
            </g>
            <path class="caps" d="M344 639H508M508 465H672M672 302H835M835 831H1000M1000 855H1165M1165 909H1330"/>
          </svg>
          <g class="tick mauve end">
            <text x="1871" y="1440">800</text><text x="1871" y="1486">600</text><text x="1871" y="1532">400</text><text x="1871" y="1578">200</text>
          </g>
          <g class="tick mauve mid">
            <text x="1908" y="1655">0.0</text><text x="1976" y="1655">0.5</text><text x="2065" y="1655">1.0</text><text x="2156" y="1655">1.5</text><text x="2246" y="1655">2.0</text><text x="2335" y="1655">2.5</text><text x="2426" y="1655">3.0</text><text x="2515" y="1655">3.5</text><text x="2606" y="1655">4.0</text><text x="2695" y="1655">4.5</text><text x="2785" y="1655">5.0</text><text x="2875" y="1655">5.5</text>
          </g>
          <text class="axis-title mauve mid" x="2414" y="1703">Bathrooms (bin)</text>
          <text class="axis-title y-title mauve mid" transform="rotate(-90 1786 1514)" x="1786" y="1514">Frequency</text>
        </svg>
      </section>

    </div>
  </main>
</div>
</body>
</html>
```

FILE: styles.css
```css
* { box-sizing: border-box; }
html, body { margin: 0; padding: 0; background: #fff; }
body { font-family: "Lato", "Open Sans", sans-serif; color: #3f1d66; }

.page {
  display: grid;
  grid-template-columns: 532px 2338px;
  column-gap: 14px;
  padding-left: 58px;
  width: 3008px;
  height: 1796px;
  overflow: hidden;
}

/* Sidebar */
.filters-title {
  margin: 0;
  height: 122px;
  padding-top: 51px;
  line-height: 50px;
  font-size: 42px;
  font-weight: 700;
  text-align: center;
  color: #3f1d66;
  border-bottom: 4px solid #3f1d66;
}
.filter-intro {
  margin: 17px 0 0;
  font-size: 25px;
  line-height: 32px;
  font-weight: 700;
  color: #3f1d66;
}
.dropdown {
  display: flex;
  margin: 11px 0 0 6px;
  width: 517px;
  height: 39px;
  border: 2px solid #ccc;
  border-radius: 3px;
  font-size: 21px;
  color: #444;
}
.dropdown-value { flex: 1; padding-left: 7px; line-height: 37px; }
.dropdown-btn {
  display: flex;
  width: 36px;
  align-items: center;
  justify-content: center;
  border-left: 2px solid #e2e2e2;
}
.weekdays {
  display: grid;
  grid-template-columns: 76px 74px 76px 76px 76px 74px 76px;
  margin-top: 25px;
  width: 530px;
  height: 39px;
  line-height: 38px;
  font-size: 25px;
  text-align: center;
  color: #333;
  border-bottom: 2px solid #ccc;
}
.calendar {
  display: grid;
  grid-template-columns: 76px 74px 76px 76px 76px 74px 76px;
  grid-auto-rows: 99.2px;
  width: 530px;
  border-bottom: 2px solid #ccc;
}
.day {
  display: flex;
  align-items: center;
  justify-content: flex-end;
  padding-right: 9px;
  font-size: 25px;
  color: #1c1c1c;
}
.day.light { color: #fff; }

.slider-group { margin-bottom: 32px; }
.calendar + .slider-group { margin-top: 18px; }
.slider-label {
  height: 30px;
  line-height: 30px;
  font-size: 25px;
  font-weight: 700;
  letter-spacing: .3px;
  color: #3f1d66;
}
.slider-row {
  display: grid;
  grid-template-columns: 175px 179px 178px;
  align-items: center;
  margin-top: 16px;
  height: 24px;
}
.slider-value { font-size: 23px; line-height: 26px; padding-top: 2px; color: #555; text-align: center; }
.slider-row .slider-value:first-child { padding-right: 7px; }
.range { display: flex; align-items: center; height: 20px; }
.range-narrow { margin: 0 2px; }
.range-partial { margin-right: 16px; }
.handle { flex: none; width: 17px; height: 20px; fill: #fff; stroke: #777; stroke-width: 2; }
.fill { flex: 1; height: 8px; background: #b0b0b0; }
.rest { flex: none; width: 44px; height: 8px; background: #e6e6e6; }

/* Main */
.main-title {
  margin: 0;
  height: 124px;
  padding: 52px 0 0 5px;
  line-height: 50px;
  font-size: 42px;
  letter-spacing: -.7px;
  font-weight: 700;
  white-space: nowrap;
  color: #3f1d66;
  border-bottom: 4px solid #3f1d66;
}
.panels {
  display: grid;
  grid-template-columns: 1136px 1186px;
  column-gap: 14px;
}
.panel-title {
  margin: 0;
  padding-left: 8px;
  height: 50px;
  line-height: 50px;
  font-size: 42px;
  font-weight: 700;
  color: #3f1d66;
}
.panel-top { height: 756px; padding-top: 28px; }
.panel-top .panel-title { margin-bottom: 24px; }
.panel-mid { height: 450px; padding-top: 30px; }
.panel-mid .panel-title { margin-bottom: 10px; }
.panel-low { padding-top: 7px; }
.panel-low .panel-title { margin-bottom: 8px; }

.chart { display: block; }
.chart-line, .chart-map { height: 654px; }
.chart-line { width: 1136px; }
.chart-map { width: 1186px; }
.chart-map svg { overflow: visible; }
.chart-hist { width: 1136px; height: 360px; }
.chart-low { height: 340px; width: 100%; }

.grid-lines line { stroke: #efefef; stroke-width: 2; }
.tick, .axis-title { font-family: "Lato", sans-serif; dominant-baseline: central; }
.tick { font-size: 24px; }
.axis-title { font-size: 25px; font-weight: 700; }
.axis-title.y-title { font-weight: 400; font-size: 26px; letter-spacing: .4px; }
.dark { fill: #3f1d66; }
.mauve { fill: #8a5a8c; }
.end { text-anchor: end; }
.mid { text-anchor: middle; }
.price-line { fill: none; stroke: #3f1d66; stroke-width: 5; stroke-linejoin: round; stroke-linecap: round; }

.bars rect { fill: #8b5f7c; stroke: #fff; stroke-width: 1; vector-effect: non-scaling-stroke; }
.caps { fill: none; stroke: #d2d2d2; stroke-width: 2; vector-effect: non-scaling-stroke; }

/* Heatmap */
.heatmap { padding-top: 54px; }
.heat-head, .heat-body {
  display: grid;
  grid-template-columns: 160px 206px 204px 206px 204px 206px;
}
.heat-head {
  height: 40px;
  line-height: 42px;
  font-size: 24.5px;
  text-align: center;
  color: #333;
  border-bottom: 2px solid #ccc;
}
.heat-body { grid-auto-rows: 48.2px; border-bottom: 2px solid #ccc; }
.heat-row {
  display: flex;
  align-items: center;
  padding-left: 13px;
  font-size: 24px;
  color: #333;
}
.heat-cell {
  display: flex;
  align-items: center;
  justify-content: flex-end;
  padding-right: 8px;
  font-size: 25px;
  color: #1c1c1c;
}
.heat-cell.light { color: #fff; }

/* Map */
.relief { filter: blur(1px); }
.relief-soft { filter: blur(4px); }
.water path, .water-fill { fill: #73cdf0; }
.land-fill { fill: #e9e7d1; }
.coast { fill: none; stroke: #cbe3ab; stroke-width: 14; }
.rivers polyline, .channels polyline { fill: none; stroke: #73cdf0; stroke-linejoin: round; vector-effect: non-scaling-stroke; }
.rivers polyline { stroke-width: 2.5; }
.rivers .wide { stroke-width: 5; }
.channels polyline { stroke-width: 5; }
.channels .thin { stroke-width: 2.5; }
.channels .thick { stroke-width: 6; }
.border-line { fill: none; stroke: #80809a; stroke-width: 2; vector-effect: non-scaling-stroke; }
.road-case polyline { fill: none; stroke: #fff; stroke-width: 5; vector-effect: non-scaling-stroke; }
.road polyline { fill: none; stroke: #f29a4e; stroke-width: 2.5; vector-effect: non-scaling-stroke; }
.city-dots circle { fill: #000; stroke: #fff; stroke-width: 1.5; }
.city text {
  font-family: "Open Sans", "Noto Sans", sans-serif;
  font-size: 22px;
  fill: #111;
  stroke: #fff;
  stroke-width: 4px;
  stroke-opacity: .75;
  paint-order: stroke;
}
.city .big { font-size: 27px; }
.city .huge { font-size: 31px; }
.city .state { font-size: 29px; font-weight: 600; letter-spacing: 4px; }
.county path { stroke: #57506f; stroke-width: 2; stroke-opacity: .8; fill-opacity: .88; }
.county .seam { fill: none; stroke-width: 1.5; stroke-opacity: .55; }
.attribution-box { fill: #fff; fill-opacity: .85; }
.attribution { font-family: "Liberation Sans", sans-serif; font-size: 16px; fill: #555; }
.shield-top { fill: #b8262e; }
.shield-body { fill: #3b4ea3; stroke: #fff; stroke-width: 1; }
.shield-num { font-family: "Open Sans", sans-serif; font-size: 19px; font-weight: 700; fill: #fff; text-anchor: middle; }
```
